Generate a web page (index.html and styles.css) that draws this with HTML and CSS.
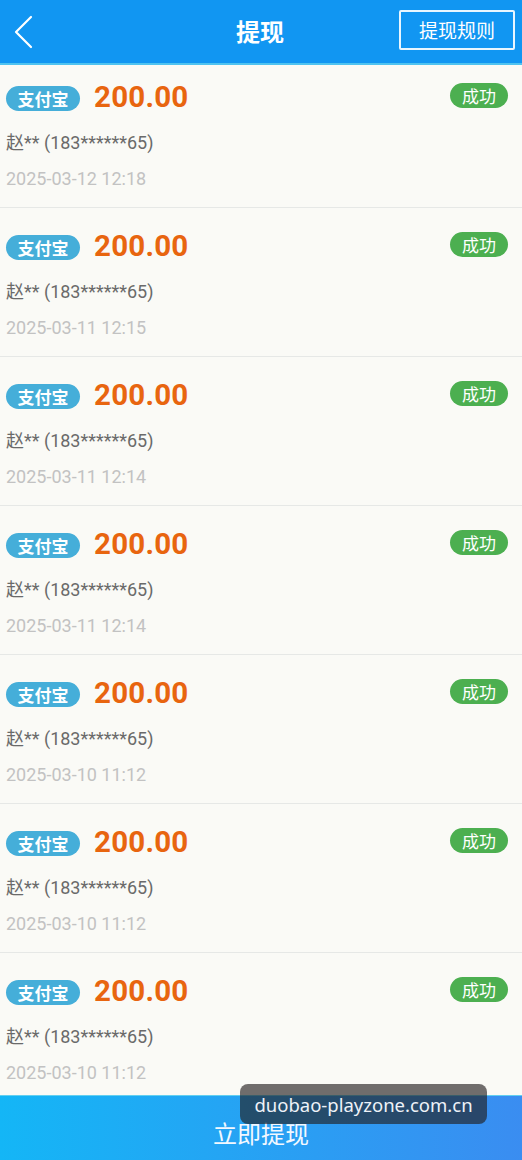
FILE: index.html
```html
<!DOCTYPE html>
<html lang="zh-CN">
<head>
<meta charset="utf-8">
<title>提现</title>
<link rel="stylesheet" href="styles.css">
</head>
<body>
<div class="app">
  <header class="topbar">
    <div class="back">
      <svg width="22" height="34" viewBox="0 0 22 34"><polyline points="18,2 3,17 18,32" fill="none" stroke="#fff" stroke-width="2.2" stroke-linecap="round" stroke-linejoin="round"/></svg>
    </div>
    <div class="title">提现</div>
    <div class="rules">提现规则</div>
  </header>
  <main class="list">
    <div class="item">
      <div class="row"><span class="chan">支付宝</span><span class="amt">200.00</span><span class="ok">成功</span></div>
      <div class="name">赵** (183******65)</div>
      <div class="date">2025-03-12 12:18</div>
    </div>
    <div class="item">
      <div class="row"><span class="chan">支付宝</span><span class="amt">200.00</span><span class="ok">成功</span></div>
      <div class="name">赵** (183******65)</div>
      <div class="date">2025-03-11 12:15</div>
    </div>
    <div class="item">
      <div class="row"><span class="chan">支付宝</span><span class="amt">200.00</span><span class="ok">成功</span></div>
      <div class="name">赵** (183******65)</div>
      <div class="date">2025-03-11 12:14</div>
    </div>
    <div class="item">
      <div class="row"><span class="chan">支付宝</span><span class="amt">200.00</span><span class="ok">成功</span></div>
      <div class="name">赵** (183******65)</div>
      <div class="date">2025-03-11 12:14</div>
    </div>
    <div class="item">
      <div class="row"><span class="chan">支付宝</span><span class="amt">200.00</span><span class="ok">成功</span></div>
      <div class="name">赵** (183******65)</div>
      <div class="date">2025-03-10 11:12</div>
    </div>
    <div class="item">
      <div class="row"><span class="chan">支付宝</span><span class="amt">200.00</span><span class="ok">成功</span></div>
      <div class="name">赵** (183******65)</div>
      <div class="date">2025-03-10 11:12</div>
    </div>
    <div class="item">
      <div class="row"><span class="chan">支付宝</span><span class="amt">200.00</span><span class="ok">成功</span></div>
      <div class="name">赵** (183******65)</div>
      <div class="date">2025-03-10 11:12</div>
    </div>
  </main>
  <footer class="action">立即提现</footer>
  <div class="watermark">duobao-playzone.com.cn</div>
</div>
</body>
</html>
```
FILE: styles.css
```css
* { box-sizing: border-box; }
html, body { margin: 0; padding: 0; }
body {
  font-family: Roboto, "Noto Sans CJK SC", sans-serif;
  background: #fafaf6;
}
.app {
  position: relative;
  width: 522px;
  height: 1160px;
  display: flex;
  flex-direction: column;
  overflow: hidden;
}
.topbar {
  flex: 0 0 65px;
  height: 65px;
  background: #1196f2;
  border-bottom: 2px solid #4fc3f0;
  display: grid;
  grid-template-columns: 1fr auto 1fr;
  align-items: center;
  padding: 0 7px 0 13px;
  position: relative;
  z-index: 2;
}
.back { display: flex; align-items: center; padding-top: 1px; }
.title {
  color: #fff;
  font-size: 24px;
  font-weight: bold;
  font-family: "Noto Sans CJK SC", sans-serif;
  padding-bottom: 2px;
  margin-right: 8px;
}
.rules {
  justify-self: end;
  color: #fff;
  font-size: 19px;
  font-family: "Noto Sans CJK SC", sans-serif;
  border: 2px solid #e8f6ff;
  border-radius: 2px;
  height: 40px;
  width: 116px;
  display: flex;
  align-items: center;
  justify-content: center;
  margin-bottom: 4px;
}
.list {
  flex: 1;
  overflow: hidden;
}
.item {
  height: 149px;
  padding: 24px 14px 0 6px;
  border-bottom: 1px solid #e6e8e6;
}
.item:first-child { height: 143px; padding-top: 18px; }
.row {
  display: flex;
  align-items: center;
  height: 28px;
}
.chan {
  background: #45aed9;
  color: #fff;
  font-family: "Noto Sans CJK SC", sans-serif;
  font-size: 17px;
  font-weight: bold;
  height: 25px;
  line-height: 25px;
  padding: 0 11.5px;
  border-radius: 13px;
  margin-top: 2px;
}
.amt {
  margin-left: 14px;
  color: #e8650f;
  font-size: 29.5px;
  font-weight: bold;
  letter-spacing: 0.2px;
}
.ok {
  margin-left: auto;
  align-self: flex-start;
  background: #4caf50;
  color: #fff;
  font-family: "Noto Sans CJK SC", sans-serif;
  font-size: 17px;
  height: 25px;
  line-height: 25px;
  padding: 0 12px;
  border-radius: 13px;
}
.name {
  margin-top: 20px;
  font-size: 18px;
  line-height: 24px;
  color: #6a6a6a;
}
.date {
  margin-top: 12px;
  font-size: 18px;
  line-height: 24px;
  color: #c2c2c2;
}
.action {
  flex: 0 0 65px;
  background: linear-gradient(90deg, #14b6f6, #3a8df1);
  border-top: 1px solid #62d0f0;
  color: #f2f8ff;
  font-family: "Noto Sans CJK SC", sans-serif;
  font-size: 24px;
  display: flex;
  align-items: center;
  justify-content: center;
  padding-top: 8px;
}
.watermark {
  position: absolute;
  left: 240px;
  top: 1084px;
  width: 247px;
  height: 40px;
  border-radius: 8px;
  background: rgba(35, 30, 30, 0.64);
  color: #eef2f8;
  font-family: "Noto Sans", sans-serif;
  font-size: 18.5px;
  display: flex;
  align-items: center;
  justify-content: center;
  z-index: 3;
}
```
